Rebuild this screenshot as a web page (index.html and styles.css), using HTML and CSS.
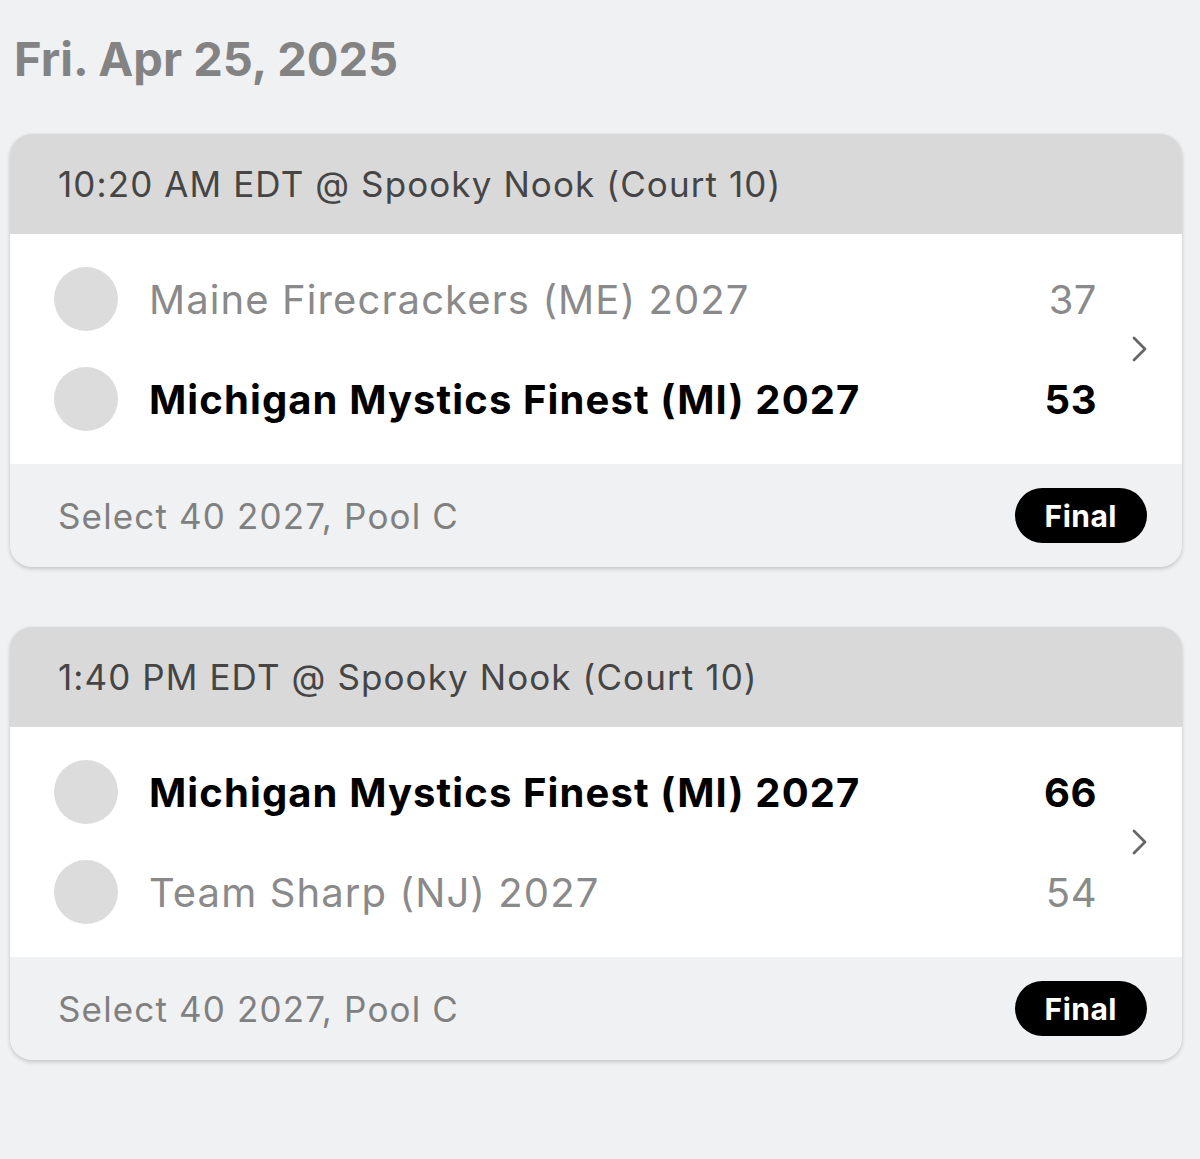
FILE: index.html
```html
<!DOCTYPE html>
<html>
<head>
<meta charset="utf-8">
<link rel="stylesheet" href="styles.css">
</head>
<body>
<div class="page">
  <h1 class="date">Fri. Apr 25, 2025</h1>

  <div class="card">
    <div class="card-head">10:20 AM EDT @ Spooky Nook (Court 10)</div>
    <div class="card-body">
      <div class="teams">
        <div class="team">
          <span class="logo"></span>
          <span class="name">Maine Firecrackers (ME) 2027</span>
          <span class="score">37</span>
        </div>
        <div class="team win">
          <span class="logo"></span>
          <span class="name">Michigan Mystics Finest (MI) 2027</span>
          <span class="score">53</span>
        </div>
      </div>
      <div class="chev">
        <svg width="18" height="28" viewBox="0 0 18 28"><path d="M3 3 L14 14 L3 25" fill="none" stroke="#666" stroke-width="2.8" stroke-linecap="round" stroke-linejoin="round"/></svg>
      </div>
    </div>
    <div class="card-foot">
      <span class="pool">Select 40 2027, Pool C</span>
      <span class="badge">Final</span>
    </div>
  </div>

  <div class="card">
    <div class="card-head">1:40 PM EDT @ Spooky Nook (Court 10)</div>
    <div class="card-body">
      <div class="teams">
        <div class="team win">
          <span class="logo"></span>
          <span class="name">Michigan Mystics Finest (MI) 2027</span>
          <span class="score">66</span>
        </div>
        <div class="team">
          <span class="logo"></span>
          <span class="name">Team Sharp (NJ) 2027</span>
          <span class="score">54</span>
        </div>
      </div>
      <div class="chev">
        <svg width="18" height="28" viewBox="0 0 18 28"><path d="M3 3 L14 14 L3 25" fill="none" stroke="#666" stroke-width="2.8" stroke-linecap="round" stroke-linejoin="round"/></svg>
      </div>
    </div>
    <div class="card-foot">
      <span class="pool">Select 40 2027, Pool C</span>
      <span class="badge">Final</span>
    </div>
  </div>
</div>
</body>
</html>
```

FILE: styles.css
```css
html, body {
  margin: 0;
  padding: 0;
  background: #f0f1f3;
}
body {
  font-family: Inter, "Noto Sans", sans-serif;
  height: 1159px;
  overflow: hidden;
}
.page {
  padding: 26px 18px 0 10px;
  display: flex;
  flex-direction: column;
  gap: 60px;
}
.date {
  margin: 0 0 -18px 4px;
  font-size: 47px;
  font-weight: 700;
  color: #838383;
  letter-spacing: 0;
  line-height: 66px;
}
.card {
  border-radius: 22px;
  overflow: hidden;
  background: #f0f1f3;
  box-shadow: 0 2px 4px rgba(0,0,0,0.18), 0 0 1px rgba(0,0,0,0.12);
}
.card-head {
  height: 100px;
  background: #d9d9d9;
  display: flex;
  align-items: center;
  padding-left: 48px;
  font-size: 35px;
  color: #454545;
  letter-spacing: 1.1px;
}
.card-body {
  background: #fff;
  display: flex;
  padding: 15px 0;
}
.teams {
  flex: 1;
  display: flex;
  flex-direction: column;
}
.team {
  height: 100px;
  display: flex;
  align-items: center;
  padding-left: 44px;
  color: #8a8a8a;
  font-size: 40px;
  letter-spacing: 1.1px;
}
.team.win {
  color: #000;
  font-weight: 700;
}
.logo {
  width: 64px;
  height: 64px;
  border-radius: 50%;
  background: #dcdcdc;
  margin-right: 31px;
  flex: none;
}
.name {
  flex: 1;
}
.score {
  text-align: right;
  letter-spacing: 0.5px;
}
.chev {
  width: 85px;
  display: flex;
  align-items: center;
  justify-content: center;
}
.card-foot {
  height: 103px;
  display: flex;
  align-items: center;
  justify-content: space-between;
  padding: 0 35px 0 48px;
  background: #f0f1f3;
}
.pool {
  font-size: 35px;
  color: #808080;
  letter-spacing: 1.15px;
}
.badge {
  background: #000;
  color: #fff;
  font-weight: 700;
  font-size: 30px;
  letter-spacing: 0.5px;
  height: 55px;
  padding: 0 30px;
  border-radius: 28px;
  display: flex;
  align-items: center;
}
```
